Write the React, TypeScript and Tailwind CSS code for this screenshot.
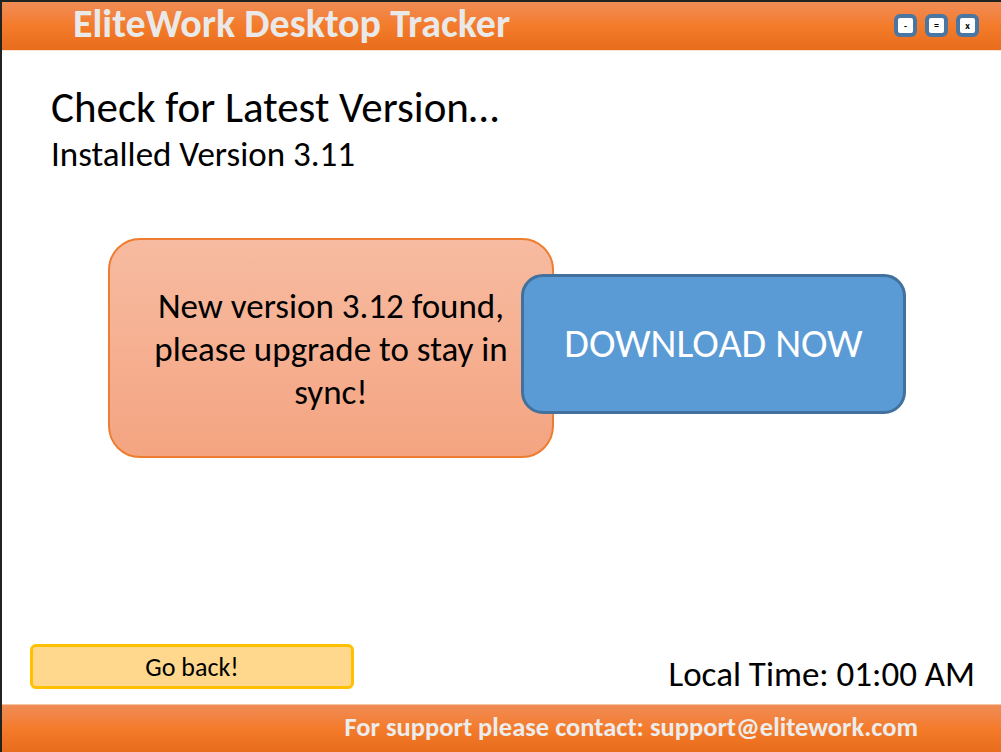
import React from 'react';

const font = { fontFamily: 'Carlito, Calibri, Lato, "Open Sans", sans-serif' };

function WinButton({ glyph }: { glyph: string }) {
  return (
    <div className="w-[23px] h-[23px] rounded-[6px] border-[4px] border-[#4a76a4] bg-white flex items-center justify-center text-[10px] leading-none text-black font-bold">
      {glyph}
    </div>
  );
}

export default function App() {
  return (
    <div
      className="w-[1001px] h-[752px] flex flex-col bg-white border-l-2 border-[#1f2421] overflow-hidden"
      style={font}
    >
      {/* title bar */}
      <div className="h-[51px] shrink-0 border-t-2 border-[#1f2421] border-b border-b-[#fbe3d2] bg-gradient-to-b from-[#f08c55] via-[#f47b29] to-[#e86d1d] flex items-center pl-[71px] pr-[22px]">
        <h1 className="text-[#e9e9e9] text-[40px] font-bold leading-none -mt-[4px]">
          EliteWork Desktop Tracker
        </h1>
        <div className="ml-auto flex gap-[8px] -mt-[1px]">
          <WinButton glyph="-" />
          <WinButton glyph="=" />
          <WinButton glyph="x" />
        </div>
      </div>

      {/* body */}
      <div className="flex-1 flex flex-col px-[49px] pt-[33px]">
        <h2 className="text-[43px] leading-[48px] text-black">Check for Latest Version…</h2>
        <p className="text-[35px] leading-[44px] text-black">Installed Version 3.11</p>

        <div className="flex items-center mt-[62px] ml-[57px]">
          <div className="w-[446px] h-[220px] rounded-[32px] border-2 border-[#ee7d31] bg-gradient-to-b from-[#f7bba1] to-[#f4a481] flex items-center justify-center px-[34px] pt-[2px]">
            <p className="text-[35px] leading-[43px] text-black text-center">
              New version 3.12 found, please upgrade to stay in sync!
            </p>
          </div>
          <div className="w-[385px] h-[140px] -ml-[33px] -mt-[8px] rounded-[22px] border-[3px] border-[#41719c] bg-[#5b9bd5] flex items-center justify-center">
            <span className="text-white text-[40px] leading-none">DOWNLOAD NOW</span>
          </div>
        </div>

        <div className="mt-auto mb-[15px] flex items-end justify-between -ml-[21px]">
          <button className="w-[324px] h-[45px] rounded-[6px] border-[3px] border-[#ffc000] bg-[#ffd88d] text-[26px] text-black leading-none">
            Go back!
          </button>
          <span className="text-[35px] leading-none text-black -mr-[23px] mb-[-3px]">Local Time: 01:00 AM</span>
        </div>
      </div>

      {/* footer */}
      <div className="h-[48px] shrink-0 border-t border-[#f7c4a3] bg-gradient-to-b from-[#f08c55] via-[#f47b29] to-[#e86d1d] flex items-center justify-end pr-[83px]">
        <span className="text-[#ececec] text-[26.5px] font-bold leading-none -mt-[2px]">
          For support please contact: support@elitework.com
        </span>
      </div>
    </div>
  );
}
